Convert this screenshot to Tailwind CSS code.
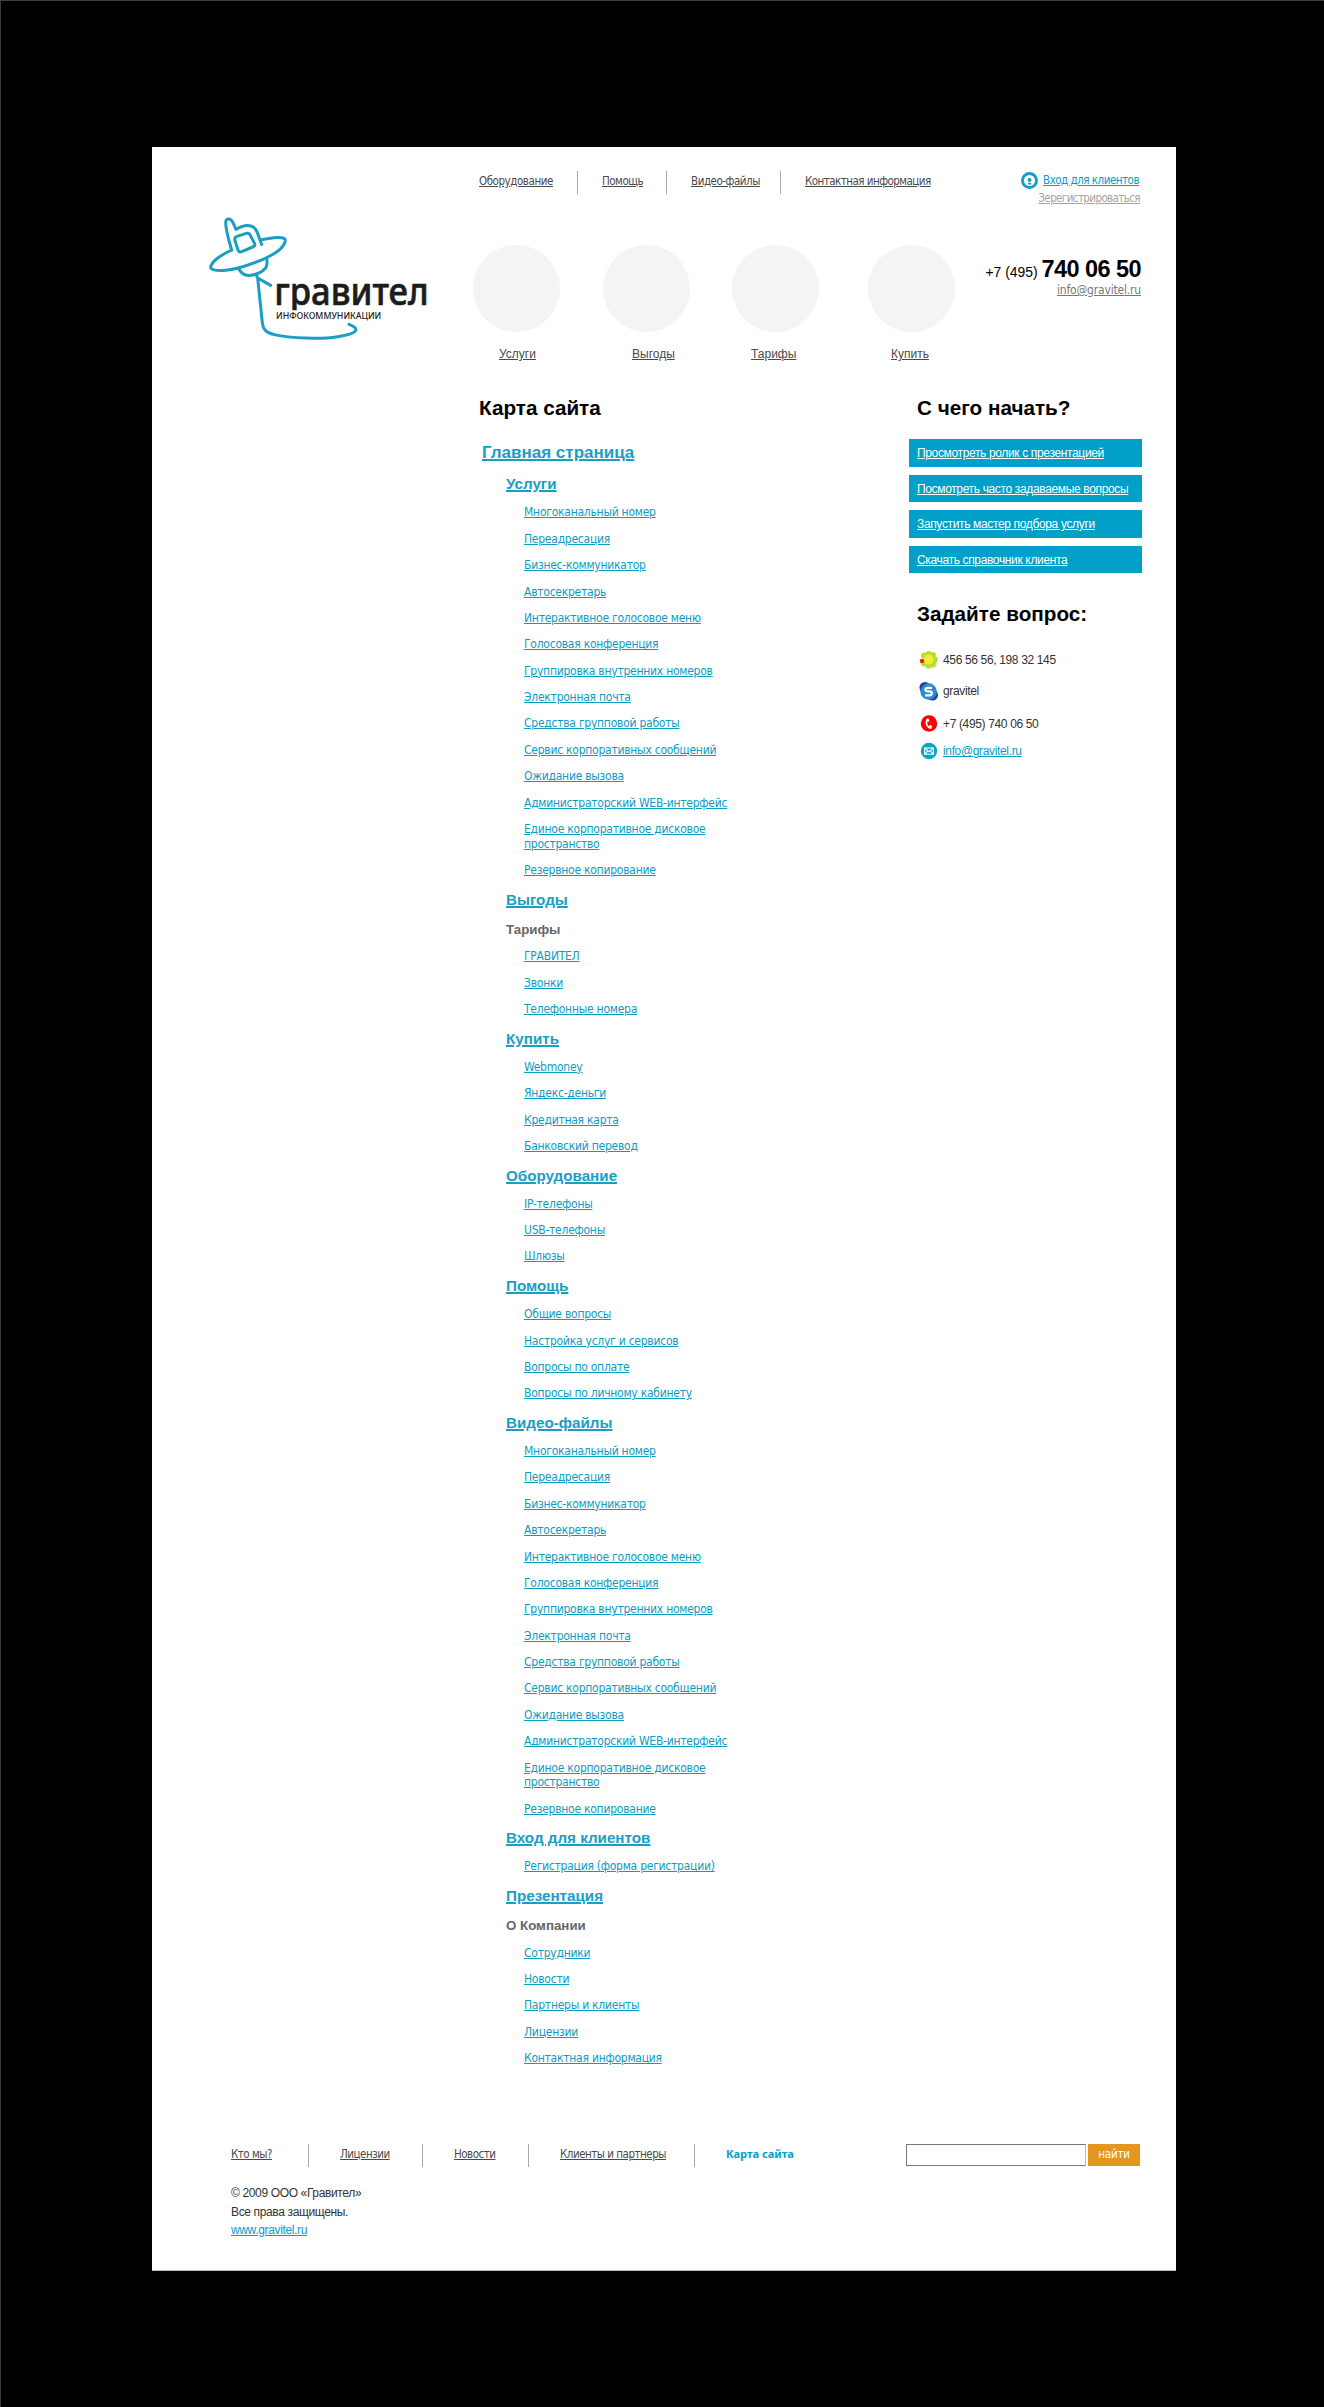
<!DOCTYPE html>
<html lang="ru">
<head>
<meta charset="utf-8">
<title>Гравител — Карта сайта</title>
<script src="https://cdn.jsdelivr.net/npm/@tailwindcss/browser@4"></script>
</head>
<body class="bg-black font-['Liberation_Sans',sans-serif] text-[12px] text-[#333]">
<div class="h-[2407px] border-t border-l border-[#3c3c3c] pt-[146px] pl-[151px]">
<div class="flex h-[2124px] w-[1024px] flex-col border-b border-[#b4baba] bg-white">

  <header class="flex h-[249px]">
    <a class="w-[321px] pt-[68px] pl-[55px]">
      <svg width="226.67" height="126.67" viewBox="200 225 680 380" fill="none" stroke="#1a9ec4" stroke-width="9" stroke-linejoin="round" stroke-linecap="round">
        <clipPath id="wordmark"><rect x="395" y="400" width="480" height="111"/></clipPath>
        <path d="M274 330C262 290 256 262 256 248C256 232 272 234 278 248L287 268C308 256 328 254 340 262C352 270 354 290 364 313"/>
        <path d="M360 300C392 294 436 286 435 302C432 322 405 342 368 358C330 374 290 388 256 391C228 393 206 390 212 377C220 358 248 342 274 330"/>
        <path d="M290 289L318 280Q327 278 330 286L343 311Q345 318 337 321L304 335Q296 338 293 330L284 302Q281 292 290 289Z"/>
        <path d="M296 388C304 402 314 409 330 406C352 403 366 396 376 384C382 374 381 366 379 356"/>
        <path d="M347 404L352 414L391 436M352 414L358 472L366 548C368 570 378 578 402 584C450 595 540 598 592 590C622 586 642 580 646 572C649 564 640 558 626 553"/>
        <g clip-path="url(#wordmark)"><text x="402" y="496" textLength="463" lengthAdjust="spacingAndGlyphs" fill="#1c1c1c" stroke="#1c1c1c" stroke-width="2" font-family="Noto Sans, sans-serif" font-weight="500" font-size="115">гравител</text></g>
        <text x="407" y="538" textLength="316" lengthAdjust="spacingAndGlyphs" fill="#1c1c1c" stroke="none" font-family="Noto Sans, sans-serif" font-weight="500" font-size="27">ИНФОКОММУНИКАЦИИ</text>
      </svg>
    </a>

    <div class="w-[482px] pt-[24px]">
      <ul class="flex h-[23px] font-['DejaVu_Sans_Condensed',sans-serif] text-[11.5px] leading-[20px] whitespace-nowrap text-[#4a4a4a] underline [&>li]:border-[#a8a8a8]">
        <li class="w-[105px] border-r pl-[6px] tracking-[-0.45px]"><a>Оборудование</a></li>
        <li class="w-[89px] border-r pl-[24px] tracking-[-0.5px]"><a>Помощь</a></li>
        <li class="w-[114px] border-r pl-[24px] tracking-[-0.47px]"><a>Видео-файлы</a></li>
        <li class="pl-[24px] tracking-[-0.54px]"><a>Контактная информация</a></li>
      </ul>
      <ul class="mt-[51px] flex leading-[16px] text-[#4a4a4a] underline">
        <li class="w-[130px]"><div class="mb-[14px] size-[87px] rounded-full bg-[#f4f4f4]"></div><a class="ml-[26px]">Услуги</a></li>
        <li class="w-[129px]"><div class="mb-[14px] size-[87px] rounded-full bg-[#f4f4f4]"></div><a class="ml-[29px]">Выгоды</a></li>
        <li class="w-[136px]"><div class="mb-[14px] size-[87px] rounded-full bg-[#f4f4f4]"></div><a class="ml-[19px]">Тарифы</a></li>
        <li><div class="mb-[14px] size-[87px] rounded-full bg-[#f4f4f4]"></div><a class="ml-[23px]">Купить</a></li>
      </ul>
    </div>

    <div class="mr-[35px] ml-auto flex flex-col items-end pt-[24px] whitespace-nowrap">
      <div class="mr-[2px] flex h-[19px] items-center gap-[5px] font-['DejaVu_Sans_Condensed',sans-serif] text-[11.5px] tracking-[-0.5px] text-[#00a0c8]">
        <svg width="17" height="17" viewBox="0 0 17 17"><circle cx="8.500" cy="8.500" r="7" fill="#fff" stroke="#1a9ec4" stroke-width="3"/><circle cx="8.500" cy="8" r="2" fill="#1a9ec4"/><path d="M6.500 12.500Q6.500 10.500 8.500 10.500T10.500 12.500Z" fill="#1a9ec4"/></svg>
        <a class="underline">Вход для клиентов</a>
      </div>
      <a class="mr-px font-['DejaVu_Sans_Condensed',sans-serif] text-[11.5px] leading-[17px] tracking-[-0.6px] text-[#a5a5a5] underline">Зерегистрироваться</a>
      <div class="mt-[48px] flex items-baseline gap-[4px] leading-[28px] text-black"><span class="text-[13.9px]">+7 (495)</span><b class="text-[23.5px] tracking-[-0.57px]">740 06 50</b></div>
      <a class="mt-[-3px] font-['DejaVu_Sans_Condensed',sans-serif] text-[12px] leading-[15px] tracking-[-0.18px] text-[#777] underline">info@gravitel.ru</a>
    </div>
  </header>

  <main class="flex flex-1">
    <section class="ml-[327px] w-[430px]">
      <h1 class="text-[20.7px] leading-[24px] font-bold text-black">Карта сайта</h1>
      <a class="mt-[23px] mb-[0.2px] ml-[3px] block text-[17px] leading-[20px] font-bold text-[#1a9ec4] underline decoration-2 underline-offset-1">Главная страница</a>
      <div class="ml-[27px] [&_ul]:ml-[18px] [&_ul]:font-['DejaVu_Sans_Condensed',sans-serif] [&_ul]:text-[12px] [&_ul]:leading-[14.67px] [&_ul]:tracking-[-0.25px] [&_ul]:text-[#0c9cc2] [&_ul]:underline [&_li]:pt-[10.88px] [&_li]:pb-[0.83px] [&_h2]:pt-[12.2px] [&_h2]:pb-[1.2px] [&_h2]:text-[15.2px] [&_h2]:leading-[18px] [&_h2]:font-bold [&_h2]:text-[#1a9ec4] [&_h2]:underline [&_h2]:decoration-2 [&_h2]:underline-offset-1 [&_h3]:pt-[11.8px] [&_h3]:pb-[0.8px] [&_h3]:text-[13.3px] [&_h3]:leading-[16px] [&_h3]:font-bold [&_h3]:text-[#666]">
        <h2>Услуги</h2>
        <ul>
          <li>Многоканальный номер</li>
          <li>Переадресация</li>
          <li>Бизнес-коммуникатор</li>
          <li>Автосекретарь</li>
          <li>Интерактивное голосовое меню</li>
          <li>Голосовая конференция</li>
          <li>Группировка внутренних номеров</li>
          <li>Электронная почта</li>
          <li>Средства групповой работы</li>
          <li>Сервис корпоративных сообщений</li>
          <li>Ожидание вызова</li>
          <li>Администраторский WEB-интерфейс</li>
          <li>Единое корпоративное дисковое<br>пространство</li>
          <li>Резервное копирование</li>
        </ul>
        <h2>Выгоды</h2>
        <h3>Тарифы</h3>
        <ul>
          <li>ГРАВИТЕЛ</li>
          <li>Звонки</li>
          <li>Телефонные номера</li>
        </ul>
        <h2>Купить</h2>
        <ul>
          <li>Webmoney</li>
          <li>Яндекс-деньги</li>
          <li>Кредитная карта</li>
          <li>Банковский перевод</li>
        </ul>
        <h2>Оборудование</h2>
        <ul>
          <li>IP-телефоны</li>
          <li>USB-телефоны</li>
          <li>Шлюзы</li>
        </ul>
        <h2>Помощь</h2>
        <ul>
          <li>Общие вопросы</li>
          <li>Настройка услуг и сервисов</li>
          <li>Вопросы по оплате</li>
          <li>Вопросы по личному кабинету</li>
        </ul>
        <h2>Видео-файлы</h2>
        <ul>
          <li>Многоканальный номер</li>
          <li>Переадресация</li>
          <li>Бизнес-коммуникатор</li>
          <li>Автосекретарь</li>
          <li>Интерактивное голосовое меню</li>
          <li>Голосовая конференция</li>
          <li>Группировка внутренних номеров</li>
          <li>Электронная почта</li>
          <li>Средства групповой работы</li>
          <li>Сервис корпоративных сообщений</li>
          <li>Ожидание вызова</li>
          <li>Администраторский WEB-интерфейс</li>
          <li>Единое корпоративное дисковое<br>пространство</li>
          <li>Резервное копирование</li>
        </ul>
        <h2>Вход для клиентов</h2>
        <ul>
          <li>Регистрация (форма регистрации)</li>
        </ul>
        <h2>Презентация</h2>
        <h3>О Компании</h3>
        <ul>
          <li>Сотрудники</li>
          <li>Новости</li>
          <li>Партнеры и клиенты</li>
          <li>Лицензии</li>
          <li>Контактная информация</li>
        </ul>
      </div>
    </section>

    <aside class="w-[233px]">
      <h2 class="ml-2 text-[20.7px] leading-[24px] font-bold text-black">С чего начать?</h2>
      <ul class="mt-[19px] flex flex-col gap-[8px] tracking-[-0.35px] text-white underline [&>li]:h-[27.6px] [&>li]:bg-[#00a0c8] [&>li]:pl-2 [&>li]:leading-[29px]">
        <li>Просмотреть ролик с презентацией</li>
        <li>Посмотреть часто задаваемые вопросы</li>
        <li>Запустить мастер подбора услуги</li>
        <li>Скачать справочник клиента</li>
      </ul>
      <h2 class="mt-[29px] ml-2 text-[20.7px] leading-[24px] font-bold text-black">Задайте вопрос:</h2>
      <ul class="mt-[26px] ml-[10px] leading-[16px] tracking-[-0.35px] text-[#333] [&>li]:flex [&>li]:h-4 [&>li]:items-center [&>li]:gap-[4px]">
        <li>
          <svg class="shrink-0" width="20" height="20" viewBox="0 0 20 20">
            <ellipse cx="12" cy="13" rx="7" ry="6" fill="#e6e6e6"/>
            <g fill="#b9dc2c"><circle cx="9.500" cy="3.800" r="2.900"/><circle cx="14" cy="5" r="2.900"/><circle cx="15.800" cy="9.500" r="2.900"/><circle cx="14" cy="14" r="2.900"/><circle cx="9.500" cy="15.500" r="2.900"/><circle cx="5" cy="13.500" r="2.900"/><circle cx="5" cy="5.500" r="2.900"/></g>
            <circle cx="9.700" cy="9.600" r="5" fill="#e6f03a"/><circle cx="9.700" cy="9.200" r="3.400" fill="#fbe93a"/><circle cx="3" cy="11" r="2.300" fill="#dc2a12"/>
          </svg>456 56 56, 198 32 145</li>
        <li class="mt-[15px]">
          <svg class="shrink-0" width="20" height="20" viewBox="0 0 20 20">
            <circle cx="6" cy="6.500" r="5.500" fill="#1c3f92"/><circle cx="13.500" cy="14" r="5.500" fill="#16489c"/><circle cx="9.600" cy="10.500" r="8.300" fill="#2c8bc8"/>
            <path d="M13 6.800H8.700Q6.500 6.800 6.500 8.600T8.700 10.300H10.900Q12.800 10.300 12.800 12.200T10.700 14.300H6.100" fill="none" stroke="#fff" stroke-width="2.300"/>
          </svg>gravitel</li>
        <li class="mt-[17px]">
          <svg class="shrink-0" width="20" height="20" viewBox="0 0 20 20">
            <circle cx="10" cy="9.500" r="8.200" fill="#f00"/>
            <path d="M8.800 5Q6.300 8.800 8.400 11.800T12 14" fill="none" stroke="#fff" stroke-width="1.700"/><path d="M8.200 4.700L9.800 7.400M10.600 11.600L12.800 13.600" stroke="#fff" stroke-width="2"/>
          </svg>+7 (495) 740 06 50</li>
        <li class="mt-[11px]">
          <svg class="shrink-0" width="20" height="20" viewBox="0 0 20 20">
            <circle cx="10" cy="10" r="8.200" fill="#0da3c8"/>
            <g fill="none" stroke="#fff" stroke-width="1.100"><rect x="5.700" y="7" width="8.600" height="6.200"/><path d="M5.700 7L10 10.600L14.300 7M5.700 13.200L8.800 9.800M14.300 13.200L11.200 9.800"/></g>
          </svg><a class="text-[#0c9cc2] underline">info@gravitel.ru</a></li>
      </ul>
    </aside>
  </main>

  <footer class="h-[126px] pr-[36px] pl-[79px]">
    <div class="flex">
      <ul class="flex h-[23px] font-['DejaVu_Sans_Condensed',sans-serif] text-[11.5px] leading-[20px] tracking-[-0.5px] whitespace-nowrap text-[#4a4a4a] [&>li]:border-[#a8a8a8]">
        <li class="w-[78px] border-r underline">Кто мы?</li>
        <li class="w-[114px] border-r pl-[31px] underline">Лицензии</li>
        <li class="w-[106px] border-r pl-[31px] underline">Новости</li>
        <li class="w-[166px] border-r pl-[31px] underline">Клиенты и партнеры</li>
        <li class="pl-[31px] font-['Noto_Sans',sans-serif] text-[11px] font-bold tracking-normal text-[#00a0c8]">Карта сайта</li>
      </ul>
      <form class="ml-auto flex gap-[2px]">
        <input aria-label="Поиск" class="h-[22px] w-[180px] border border-[#777] border-r-[#b8b8b8] bg-white">
        <button type="button" class="h-[22px] w-[52px] bg-[#e4961e] font-['DejaVu_Sans_Condensed',sans-serif] text-[11.5px] tracking-[-0.2px] text-white">найти</button>
      </form>
    </div>
    <p class="mt-[17px] leading-[18.6px] tracking-[-0.36px]">© 2009 ООО «Гравител»<br>Все права защищены.<br><a class="text-[#00a0c8] underline">www.gravitel.ru</a></p>
  </footer>
</div>
</div>
</body>
</html>
